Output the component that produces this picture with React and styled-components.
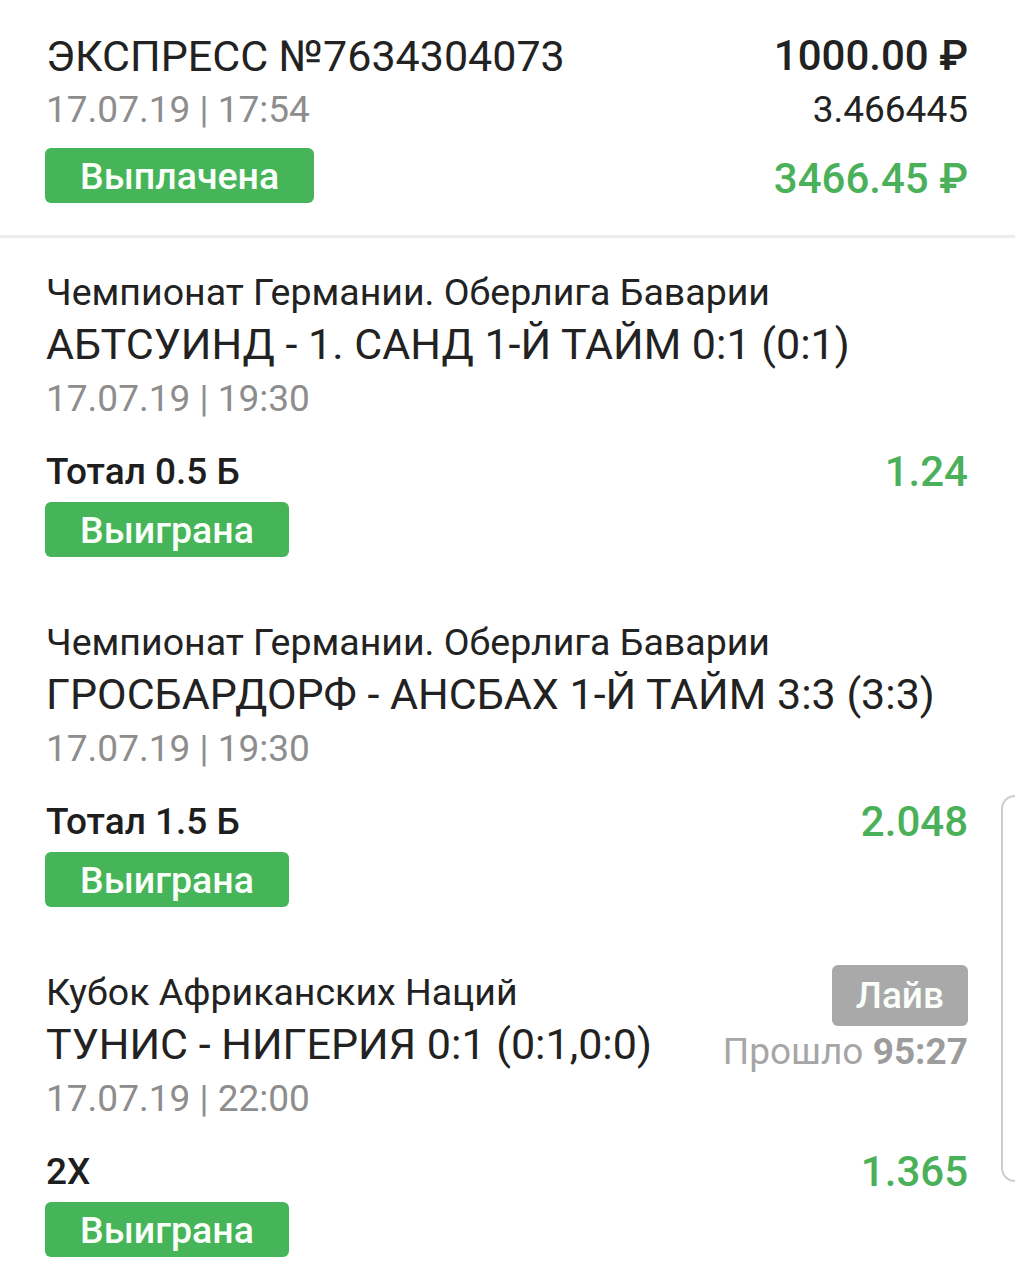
import React from 'react'
import styled, { createGlobalStyle } from 'styled-components'

const GlobalStyle = createGlobalStyle`
  html, body {
    margin: 0;
    padding: 0;
    background: #ffffff;
    overflow: hidden;
  }
  body {
    font-family: Roboto, "Noto Sans", "DejaVu Sans", sans-serif;
    color: #212121;
  }
`

const GREEN = '#46b458'
const GREEN_TEXT = '#4bb05a'
const GREY_TEXT = '#8d8d8d'

const Page = styled.div`
  width: 1015px;
  min-height: 1280px;
  background: #fff;
`

const Header = styled.header`
  display: grid;
  grid-template-columns: 1fr auto;
  grid-template-rows: 51px 54px auto;
  padding: 32px 47px 29px 45px;
  border-bottom: 3px solid #ececec;
`

const Title = styled.div`
  font-size: 43px;
  line-height: 48px;
  font-weight: 400;
  color: #222;
  white-space: nowrap;
  padding-left: 1px;
`

const DateText = styled.div`
  font-size: 37px;
  line-height: ${p => p.$lh || 54}px;
  color: ${GREY_TEXT};
  white-space: nowrap;
  padding-left: 1px;
`

const RightCell = styled.div`
  text-align: right;
  white-space: nowrap;
  font-size: ${p => p.$size || 42}px;
  line-height: ${p => p.$lh || 48}px;
  font-weight: ${p => p.$weight || 400};
  color: ${p => p.$color || '#222'};
`

const Badge = styled.div`
  display: inline-flex;
  align-items: center;
  justify-content: center;
  justify-self: start;
  height: ${p => p.$h || 55}px;
  padding: 0 ${p => p.$pad || 35}px;
  border-radius: 6px;
  background: ${p => (p.$tone === 'grey' ? '#a9a9a9' : GREEN)};
  color: #fafffa;
  font-size: ${p => p.$size || 37.5}px;
  font-weight: 500;
  white-space: nowrap;
`

const PayBadge = styled(Badge)`
  margin-top: 11px;
`

const Payout = styled(RightCell)`
  margin-top: 11px;
  padding-top: 3px;
  line-height: 55px;
  align-self: start;
`

const Event = styled.section`
  padding: 30px 47px 31px 45px;
`

const EventTop = styled.div`
  display: grid;
  grid-template-columns: 1fr auto;
  column-gap: 20px;
`

const League = styled.div`
  font-size: 37.5px;
  line-height: 48px;
  color: #222;
  white-space: nowrap;
  padding-left: 1px;
`

const Match = styled.div`
  font-size: 43px;
  line-height: 56px;
  color: #222;
  white-space: nowrap;
  padding-left: 1px;
`

const LiveBox = styled.div`
  display: flex;
  flex-direction: column;
  align-items: flex-end;
  margin-top: -3px;
`

const Elapsed = styled.div`
  margin-top: 4px;
  font-size: 37px;
  line-height: 44px;
  color: #a6a6a6;
  white-space: nowrap;

  b {
    font-weight: 700;
    color: #9c9c9c;
  }
`

const BetRow = styled.div`
  display: flex;
  justify-content: space-between;
  align-items: flex-end;
  margin-top: 22px;
`

const BetName = styled.div`
  font-size: 37px;
  line-height: 44px;
  font-weight: 500;
  color: #1e1e1e;
  padding-left: 1px;
`

const Odds = styled.div`
  font-size: 42px;
  line-height: 44px;
  font-weight: 500;
  color: ${GREEN_TEXT};
  padding-top: 3px;
`

const ResultBadge = styled(Badge)`
  margin-top: 8px;
`

// fast-scroll handle peeking in from the right edge
const ScrollHandle = styled.div`
  position: fixed;
  top: 795px;
  left: 1001px;
  width: 40px;
  height: 383px;
  border: 2px solid #cdcdcd;
  border-radius: 14px;
  background: #fff;
`

const events = [
  {
    league: 'Чемпионат Германии. Оберлига Баварии',
    match: 'АБТСУИНД - 1. САНД 1-Й ТАЙМ 0:1 (0:1)',
    date: '17.07.19 | 19:30',
    bet: 'Тотал 0.5 Б',
    odds: '1.24'
  },
  {
    league: 'Чемпионат Германии. Оберлига Баварии',
    match: 'ГРОСБАРДОРФ - АНСБАХ 1-Й ТАЙМ 3:3 (3:3)',
    date: '17.07.19 | 19:30',
    bet: 'Тотал 1.5 Б',
    odds: '2.048'
  },
  {
    league: 'Кубок Африканских Наций',
    match: 'ТУНИС - НИГЕРИЯ 0:1 (0:1,0:0)',
    date: '17.07.19 | 22:00',
    bet: '2X',
    odds: '1.365',
    live: '95:27'
  }
]

const EventBlock = ({ item }) => (
  <Event>
    <EventTop>
      <div>
        <League>{item.league}</League>
        <Match>{item.match}</Match>
        <DateText $lh={53}>{item.date}</DateText>
      </div>
      {item.live && (
        <LiveBox>
          <Badge $tone="grey" $h={61} $pad={24} $size={37}>Лайв</Badge>
          <Elapsed>
            Прошло <b>{item.live}</b>
          </Elapsed>
        </LiveBox>
      )}
    </EventTop>
    <BetRow>
      <BetName>{item.bet}</BetName>
      <Odds>{item.odds}</Odds>
    </BetRow>
    <ResultBadge>Выиграна</ResultBadge>
  </Event>
)

export default function App() {
  return (
    <Page>
      <GlobalStyle />
      <Header>
        <Title>ЭКСПРЕСС №7634304073</Title>
        <RightCell $weight={500}>1000.00 ₽</RightCell>
        <DateText>17.07.19 | 17:54</DateText>
        <RightCell $size={37} $lh={54}>3.466445</RightCell>
        <PayBadge>Выплачена</PayBadge>
        <Payout $weight={500} $color={GREEN_TEXT}>3466.45 ₽</Payout>
      </Header>
      {events.map((e, i) => (
        <EventBlock key={i} item={e} />
      ))}
      <ScrollHandle />
    </Page>
  )
}
